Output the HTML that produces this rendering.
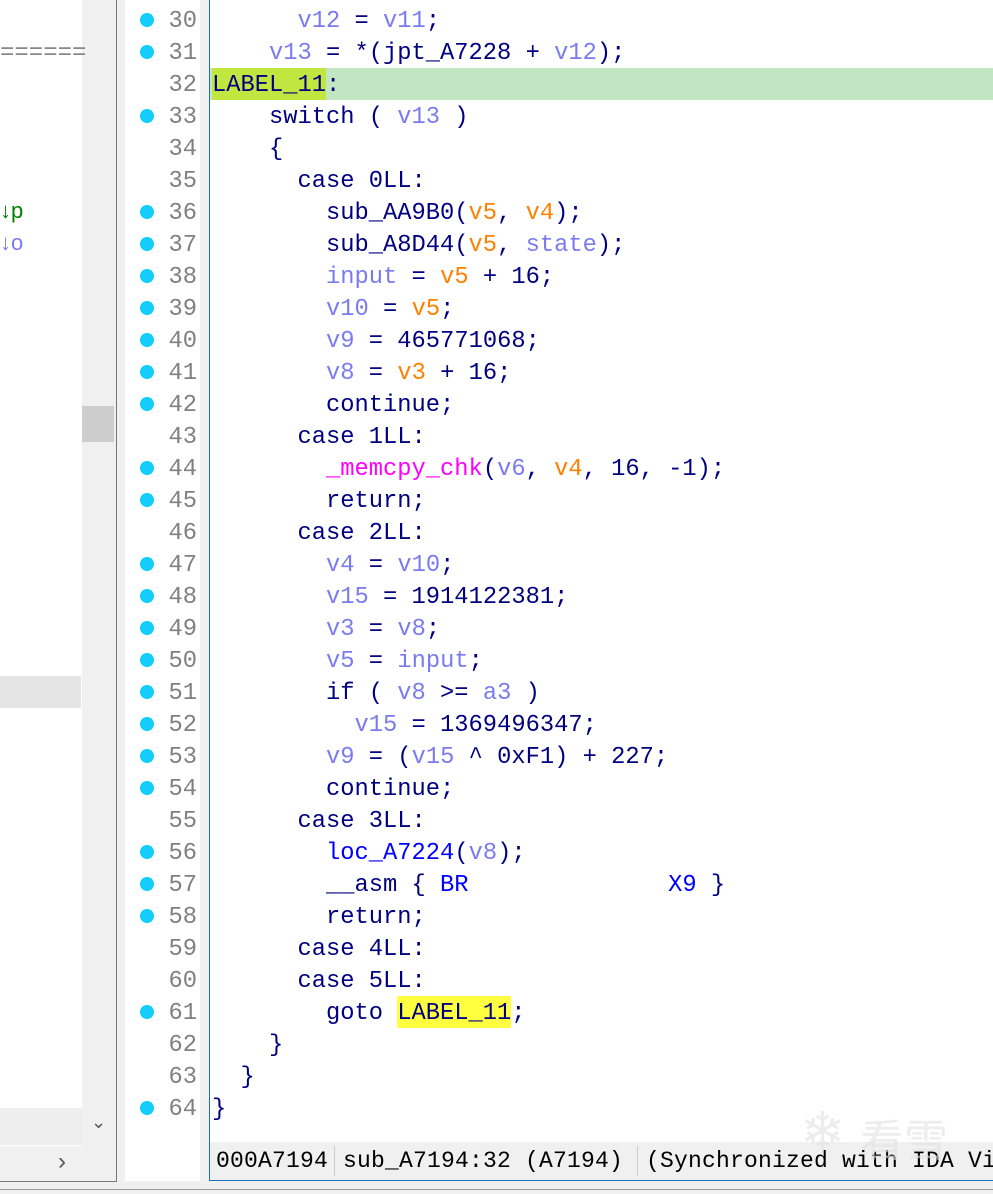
<!DOCTYPE html>
<html><head><meta charset="utf-8"><style>
*{margin:0;padding:0;box-sizing:border-box}
html,body{width:993px;height:1194px;overflow:hidden}
body{background:#f0f0f0;position:relative;font-family:"Liberation Mono",monospace}
.abs{position:absolute}
#code{position:absolute;left:212px;top:6px;font-size:23.75px;line-height:32px;color:#000080}
#code div{height:32px;white-space:pre}
.v{color:#7b7bf0}.o{color:#ff8000}.m{color:#ff00ff}.b{color:#0000ff}
#nums{position:absolute;left:125px;top:6px;width:72px;font-size:23.75px;line-height:32px;color:#808080;text-align:right}
#nums div{height:32px;position:relative}
.dot{position:absolute;left:15px;top:7px;width:14px;height:14px;border-radius:50%;background:#14cdfb}
.st{position:absolute;top:1147px;font-family:'Liberation Mono',monospace;font-size:23px;line-height:28px;color:#000;white-space:pre;letter-spacing:0.2px}
</style></head><body>
<div class="abs" style="left:0;top:0;width:82px;height:1108px;background:#fff"></div>
<div class="abs" style="left:0;top:676px;width:81px;height:32px;background:#e5e5e5"></div>
<div class="abs" style="left:0;top:1108px;width:82px;height:38px;background:#eee;border-bottom:1px solid #fff"></div>
<div class="abs" style="left:82px;top:406px;width:32px;height:36px;background:#cdcdcd"></div>
<div class="abs" style="left:0;top:40px;font-size:24px;color:#888;white-space:pre">======</div>
<div class="abs" style="left:0;top:198px;font-family:'Liberation Sans',sans-serif;font-size:22px;color:#008000">↓p</div>
<div class="abs" style="left:0;top:230px;font-family:'Liberation Sans',sans-serif;font-size:22px;color:#7b7bf0">↓o</div>
<div class="abs" style="left:91px;top:1112px;font-family:'Liberation Sans',sans-serif;font-size:18px;color:#555">&#8964;</div>
<div class="abs" style="left:58px;top:1148px;font-family:'Liberation Sans',sans-serif;font-size:24px;color:#555">›</div>
<div class="abs" style="left:116px;top:0;width:1px;height:1181px;background:#777"></div>
<div class="abs" style="left:0;top:1181px;width:117px;height:1px;background:#777"></div>
<div class="abs" style="left:125px;top:0;width:75px;height:1181px;background:#fff"></div>
<div class="abs" style="left:209px;top:0;width:1px;height:1181px;background:#1c6fc0"></div>
<div class="abs" style="left:210px;top:0;width:783px;height:1142px;background:#fff"></div>
<div class="abs" style="left:210px;top:68px;width:783px;height:32px;background:#c2e6c2"></div>
<div class="abs" style="left:212px;top:68px;width:114px;height:32px;background:#c2e640"></div>
<div class="abs" style="left:397px;top:996px;width:114px;height:32px;background:#ffff40"></div>
<div class="abs" style="left:210px;top:1142px;width:783px;height:38px;background:#f0f0f0"></div>
<div class="abs" style="left:210px;top:1180px;width:783px;height:1px;background:#1c6fc0"></div>
<div class="abs" style="left:0;top:1189px;width:993px;height:1px;background:#999"></div>
<div class="abs" style="left:334px;top:1146px;width:1px;height:30px;background:#ccc"></div>
<div class="abs" style="left:637px;top:1146px;width:1px;height:30px;background:#ccc"></div>
<div class="st" style="left:216px">000A7194</div>
<div class="st" style="left:343px">sub_A7194:32 (A7194)</div>
<div class="st" style="left:646px">(Synchronized with IDA Vi</div>
<div class="abs" style="left:860px;top:1105px;font-family:'Noto Sans CJK SC',sans-serif;font-size:44px;color:rgba(225,225,225,0.6)">看雪</div>
<div class="abs" style="left:800px;top:1100px;font-size:54px;color:rgba(225,225,225,0.6);font-family:'DejaVu Sans',sans-serif">❄</div>

<div id="nums">
<div><span class="dot"></span>30</div><div><span class="dot"></span>31</div><div>32</div><div><span class="dot"></span>33</div><div>34</div><div>35</div><div><span class="dot"></span>36</div><div><span class="dot"></span>37</div><div><span class="dot"></span>38</div><div><span class="dot"></span>39</div><div><span class="dot"></span>40</div><div><span class="dot"></span>41</div><div><span class="dot"></span>42</div><div>43</div><div><span class="dot"></span>44</div><div><span class="dot"></span>45</div><div>46</div><div><span class="dot"></span>47</div><div><span class="dot"></span>48</div><div><span class="dot"></span>49</div><div><span class="dot"></span>50</div><div><span class="dot"></span>51</div><div><span class="dot"></span>52</div><div><span class="dot"></span>53</div><div><span class="dot"></span>54</div><div>55</div><div><span class="dot"></span>56</div><div><span class="dot"></span>57</div><div><span class="dot"></span>58</div><div>59</div><div>60</div><div><span class="dot"></span>61</div><div>62</div><div>63</div><div><span class="dot"></span>64</div>
</div>

<div id="code"><div>      <span class="v">v12</span> = <span class="v">v11</span>;</div><div>    <span class="v">v13</span> = *(jpt_A7228 + <span class="v">v12</span>);</div><div>LABEL_11:</div><div>    switch ( <span class="v">v13</span> )</div><div>    {</div><div>      case 0LL:</div><div>        sub_AA9B0(<span class="o">v5</span>, <span class="o">v4</span>);</div><div>        sub_A8D44(<span class="o">v5</span>, <span class="v">state</span>);</div><div>        <span class="v">input</span> = <span class="o">v5</span> + 16;</div><div>        <span class="v">v10</span> = <span class="o">v5</span>;</div><div>        <span class="v">v9</span> = 465771068;</div><div>        <span class="v">v8</span> = <span class="o">v3</span> + 16;</div><div>        continue;</div><div>      case 1LL:</div><div>        <span class="m">_memcpy_chk</span>(<span class="v">v6</span>, <span class="o">v4</span>, 16, -1);</div><div>        return;</div><div>      case 2LL:</div><div>        <span class="v">v4</span> = <span class="v">v10</span>;</div><div>        <span class="v">v15</span> = 1914122381;</div><div>        <span class="v">v3</span> = <span class="v">v8</span>;</div><div>        <span class="v">v5</span> = <span class="v">input</span>;</div><div>        if ( <span class="v">v8</span> &gt;= <span class="v">a3</span> )</div><div>          <span class="v">v15</span> = 1369496347;</div><div>        <span class="v">v9</span> = (<span class="v">v15</span> ^ 0xF1) + 227;</div><div>        continue;</div><div>      case 3LL:</div><div>        <span class="b">loc_A7224</span>(<span class="v">v8</span>);</div><div>        __asm { <span class="b">BR</span>              <span class="b">X9</span> }</div><div>        return;</div><div>      case 4LL:</div><div>      case 5LL:</div><div>        goto LABEL_11;</div><div>    }</div><div>  }</div><div>}</div></div>
</body></html>
